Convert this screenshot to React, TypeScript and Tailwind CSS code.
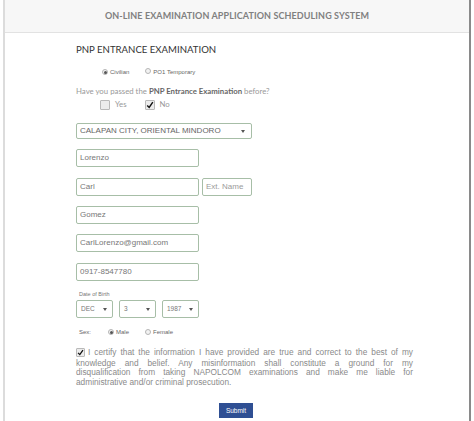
import React from "react";

const F = { fontFamily: '"Liberation Sans", Arial, sans-serif' };

function Radio({ on }: { on?: boolean }) {
  return (
    <span className="inline-flex w-[6px] h-[6px] rounded-full border border-[#b5b5b5] bg-[#f3f3f3] items-center justify-center">
      {on && <span className="w-[3px] h-[3px] rounded-full bg-[#555]" />}
    </span>
  );
}

function Check({ on, size = 10 }: { on?: boolean; size?: number }) {
  return (
    <span
      className="inline-flex items-center justify-center border border-[#b9b9b9] rounded-[1px] bg-[#ececec]"
      style={{ width: size, height: size }}
    >
      {on && (
        <svg viewBox="0 0 10 10" width={size - 2} height={size - 2}>
          <path d="M1.5 5.5 L4 8 L8.5 1.5" stroke="#111" strokeWidth="1.8" fill="none" />
        </svg>
      )}
    </span>
  );
}

function Arrow() {
  return (
    <svg width="4" height="3" viewBox="0 0 4 3">
      <path d="M0 0 L4 0 L2 3 Z" fill="#555" />
    </svg>
  );
}

function Input({ value, w = "w-[123px]", color = "text-[#777]" }: { value: string; w?: string; color?: string }) {
  return (
    <div className={`${w} h-[18px] border border-[#a7bea7] rounded-[2px] flex items-center pl-[3px] text-[8px] ${color}`} style={F}>
      {value}
    </div>
  );
}

export default function App() {
  return (
    <div className="w-[474px] h-[421px] bg-white overflow-hidden">
      <div className="ml-[3px] w-[468px] h-[421px] border-l-[2px] border-l-[#dcdcdc] border-r-[2px] border-r-[#8a8a8a] flex flex-col">
        <div className="h-[33px] bg-[#f7f7f7] border-b border-b-[#e2e2e2] flex items-center justify-center">
          <span className="text-[9px] font-bold text-[#808080] tracking-[0.1px]" style={{ fontFamily: 'Lato, "Liberation Sans", sans-serif' }}>
            ON-LINE EXAMINATION APPLICATION SCHEDULING SYSTEM
          </span>
        </div>
        <div className="pl-[71px] flex flex-col">
          <div className="mt-[10px] h-[14px] leading-[14px] text-[9.6px] text-[#333]" style={{ fontFamily: 'Lato, "Liberation Sans", sans-serif' }}>
            PNP ENTRANCE EXAMINATION
          </div>
          <div className="mt-[10px] h-[10px] flex items-center text-[6px] text-[#666] pl-[26px]" style={F}>
            <Radio on />
            <span className="ml-[2px]">Civilian</span>
            <span className="ml-[16px]"><Radio /></span>
            <span className="ml-[2px]">PO1 Temporary</span>
          </div>
          <div className="mt-[9px] h-[11px] leading-[11px] text-[7.8px] text-[#999]" style={{ fontFamily: 'Lato, "Liberation Sans", sans-serif' }}>
            Have you passed the <b className="text-[#666]">PNP Entrance Examination</b> before?
          </div>
          <div className="mt-[2px] h-[12px] flex items-center text-[7.8px] text-[#999] pl-[24px]" style={{ fontFamily: 'Lato, "Liberation Sans", sans-serif' }}>
            <Check />
            <span className="ml-[5px]">Yes</span>
            <span className="ml-[18px] flex"><Check on /></span>
            <span className="ml-[5px]">No</span>
          </div>
          <div className="mt-[12px] w-[176px] h-[16px] border border-[#a7bea7] rounded-[2px] flex items-center justify-between pl-[3px] pr-[6px] text-[8px] text-[#666]" style={F}>
            <span>CALAPAN CITY, ORIENTAL MINDORO</span>
            <Arrow />
          </div>
          <div className="mt-[10px]"><Input value="Lorenzo" /></div>
          <div className="mt-[11px] flex gap-[3px]">
            <Input value="Carl" />
            <Input value="Ext. Name" w="w-[50px]" color="text-[#9a9a9a]" />
          </div>
          <div className="mt-[10px]"><Input value="Gomez" /></div>
          <div className="mt-[10px]"><Input value="CarlLorenzo@gmail.com" /></div>
          <div className="mt-[11px]"><Input value="0917-8547780" /></div>
          <div className="mt-[9px] h-[8px] leading-[8px] pl-[3px] text-[5.5px] text-[#777]" style={F}>Date of Birth</div>
          <div className="mt-[2px] flex gap-[6px]">
            {["DEC", "3", "1987"].map((v) => (
              <div key={v} className="w-[37px] h-[18px] border border-[#a7bea7] rounded-[2px] flex items-center justify-between pl-[4px] pr-[5px] text-[6.5px] text-[#777]" style={F}>
                <span>{v}</span>
                <Arrow />
              </div>
            ))}
          </div>
          <div className="mt-[9px] h-[10px] flex items-center text-[6px] text-[#666] pl-[3px]" style={F}>
            <span>Sex:</span>
            <span className="ml-[17px] flex"><Radio on /></span>
            <span className="ml-[2px]">Male</span>
            <span className="ml-[16px] flex"><Radio /></span>
            <span className="ml-[2px]">Female</span>
          </div>
          <div className="mt-[11px] w-[337px] text-[8.3px] leading-[9.6px] text-[#8a8a8a]" style={F}>
            <div className="text-justify [text-align-last:justify]">
              <span className="inline-block align-[-1px] mr-[3px]"><Check on size={9} /></span>
              I certify that the information I have provided are true and correct to the best of my
            </div>
            <div className="text-justify [text-align-last:justify]">
              knowledge and belief. Any misinformation shall constitute a ground for my
            </div>
            <div className="text-justify [text-align-last:justify]">
              disqualification from taking NAPOLCOM examinations and make me liable for
            </div>
            <div>administrative and/or criminal prosecution.</div>
          </div>
          <div className="mt-[16px] ml-[143px] w-[34px] h-[15px] bg-[#2f4f93] flex items-center justify-center text-[6.5px] text-white" style={F}>
            Submit
          </div>
        </div>
      </div>
    </div>
  );
}
